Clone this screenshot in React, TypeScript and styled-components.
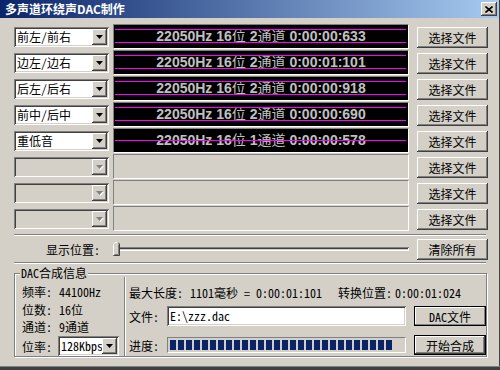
import React, { FC } from 'react';
import styled, { createGlobalStyle, css } from 'styled-components';

const GlobalStyle = createGlobalStyle`
  html, body {
    margin: 0;
    padding: 0;
    background: #d4d0c8;
  }
  body {
    font-family: "Noto Sans Mono CJK SC", "Noto Sans CJK SC", sans-serif;
    font-size: 12px;
    color: #000;
  }
  * {
    box-sizing: border-box;
  }
`;

const raised = css`
  background: #d4d0c8;
  box-shadow: inset -1px -1px #404040, inset 1px 1px #fff, inset -2px -2px #808080;
`;

const sunken = css`
  box-shadow: inset 1px 1px #808080, inset -1px -1px #fff, inset 2px 2px #404040, inset -2px -2px #d4d0c8;
`;

const Window = styled.div`
  width: 500px;
  height: 370px;
  background: #d4d0c8;
  display: flex;
  flex-direction: column;
  padding: 0 1px 4px 0;
  box-shadow: inset 0 -3px #404040, inset 0 -4px #808080, inset -1px 0 #404040;
  overflow: hidden;
`;

const TitleBar = styled.div`
  height: 18px;
  display: flex;
  align-items: center;
  justify-content: space-between;
  padding: 0 2px 0 5px;
  background: linear-gradient(to right, #0a246a, #a6caf0);
`;

const Title = styled.div`
  color: #fff;
  font-family: "Noto Sans CJK SC", sans-serif;
  font-weight: bold;
  font-size: 12px;
  line-height: 18px;
`;

const CloseButton = styled.div`
  ${raised};
  width: 16px;
  height: 14px;
  display: flex;
  align-items: center;
  justify-content: center;
`;

const Body = styled.div`
  padding: 6px 0 0 14px;
  display: flex;
  flex-direction: column;
`;

const Row = styled.div`
  display: flex;
  align-items: center;
  height: 26px;
`;

const Combo = styled.div<{ $disabled?: boolean; $width?: number }>`
  ${sunken};
  width: ${p => p.$width ?? 95}px;
  height: 20px;
  padding: 2px;
  display: flex;
  background: ${p => (p.$disabled ? '#d4d0c8' : '#fff')};
`;

const ComboText = styled.div`
  flex: 1;
  min-width: 0;
  padding-left: 1px;
  line-height: 16px;
  white-space: nowrap;
`;

const ComboButton = styled.div`
  ${raised};
  flex: none;
  width: 15px;
  height: 16px;
  display: flex;
  align-items: center;
  justify-content: center;
`;

const Cell = styled.div<{ $filled?: boolean }>`
  position: relative;
  align-self: flex-start;
  margin-left: 4px;
  width: 296px;
  height: 25px;
  border: 1px solid;
  border-color: #808080 #fff #fff #808080;
  background: ${p => (p.$filled ? '#000' : '#d4d0c8')};
  display: flex;
  align-items: center;
  justify-content: center;
`;

const WaveText = styled.div`
  color: #c0c0c0;
  font-family: "Liberation Sans", "Noto Sans CJK SC", sans-serif;
  font-size: 14px;
  font-weight: bold;
  white-space: nowrap;
  line-height: 23px;
`;

const Cjk = styled.span`
  font-weight: normal;
`;

const Wave = styled.svg`
  position: absolute;
  left: 0;
  top: 0;
`;

const Button = styled.div<{ $default?: boolean; $outlined?: boolean; $width?: number; $height?: number }>`
  ${raised};
  margin-left: 8px;
  width: ${p => p.$width ?? 71}px;
  height: ${p => p.$height ?? 21}px;
  display: flex;
  align-items: center;
  justify-content: center;
  font-family: "Noto Sans Mono CJK SC", "Noto Sans CJK SC", sans-serif;
  font-size: 12px;
  ${p =>
    p.$outlined &&
    css`
      box-shadow: inset 0 0 0 1px #000, inset -2px -2px #808080, inset 2px 2px #fff;
    `}
  ${p =>
    p.$default &&
    css`
      box-shadow: inset 0 0 0 1px #000, inset -2px -2px #404040, inset 2px 2px #fff, inset -3px -3px #808080;
    `}
`;

const Separator = styled.div<{ $top?: number }>`
  width: 472px;
  height: 2px;
  margin-top: ${p => p.$top ?? 0}px;
  border-top: 1px solid #808080;
  border-bottom: 1px solid #fff;
`;

const SliderLabel = styled.div`
  width: 95px;
  padding-right: 9px;
  text-align: right;
`;

const Slider = styled.div`
  position: relative;
  margin-left: 4px;
  width: 296px;
  height: 16px;
  display: flex;
  align-items: center;
`;

const Track = styled.div`
  flex: 1;
  margin-left: 3px;
  height: 4px;
  box-shadow: inset 1px 1px #808080, inset -1px -1px #fff, inset 2px 2px #404040;
`;

const Thumb = styled.svg`
  position: absolute;
  left: 0;
  top: 1px;
`;

const GroupBox = styled.div`
  position: relative;
  margin-top: 9px;
  width: 473px;
  height: 84px;
  border: 1px solid #808080;
  box-shadow: inset 1px 1px #fff, 1px 1px #fff;
  display: flex;
`;

const Caption = styled.div`
  position: absolute;
  top: -9px;
  left: 5px;
  padding: 0 1px;
  line-height: 16px;
  background: #d4d0c8;
`;

const InfoColumn = styled.div`
  width: 109px;
  padding: 8px 0 0 7px;
  display: grid;
  grid-template-rows: 18px 18px 17px 22px;
  align-content: start;
  align-items: center;
`;

const InfoRow = styled.div`
  display: flex;
  align-items: center;
  white-space: nowrap;
`;

const InfoLabel = styled.span<{ $width: number }>`
  display: inline-block;
  flex: none;
  width: ${p => p.$width}px;
  white-space: nowrap;
`;

const VSep = styled.div`
  width: 2px;
  margin-top: 3px;
  border-left: 1px solid #808080;
  border-right: 1px solid #fff;
`;

const MainColumn = styled.div`
  flex: 1;
  padding: 9px 0 0 3px;
  display: flex;
  flex-direction: column;
`;

const StatusLine = styled.div`
  height: 18px;
  display: flex;
  align-items: center;
  white-space: nowrap;
`;

const FieldRow = styled.div<{ $top: number }>`
  margin-top: ${p => p.$top}px;
  height: 20px;
  display: flex;
  align-items: center;
`;

const TextInput = styled.div`
  ${sunken};
  width: 239px;
  height: 20px;
  padding: 0 3px;
  background: #fff;
  line-height: 20px;
`;

const Progress = styled.div`
  width: 239px;
  height: 16px;
  padding: 2px;
  border: 1px solid;
  border-color: #808080 #fff #fff #808080;
`;

const ProgressFill = styled.div`
  height: 100%;
  background: repeating-linear-gradient(to right, #0a246a 0, #0a246a 6px, transparent 6px, transparent 8px);
`;

const Arrow: FC<{ disabled?: boolean }> = ({ disabled }) => (
  <svg width="8" height="5" viewBox="0 0 8 5">
    {disabled && <polygon points="1,1 8,1 4.5,5" fill="#fff" />}
    <polygon points="0,0 7,0 3.5,4" fill={disabled ? '#808080' : '#000'} />
  </svg>
);

type Channel = { name: string; chans: number; time: string };

const channels: Channel[] = [
  { name: '前左/前右', chans: 2, time: '0:00:00:633' },
  { name: '边左/边右', chans: 2, time: '0:00:01:101' },
  { name: '后左/后右', chans: 2, time: '0:00:00:918' },
  { name: '前中/后中', chans: 2, time: '0:00:00:690' },
  { name: '重低音', chans: 1, time: '0:00:00:578' },
];

const progress = 224;

const App: FC = () => {
  return (
    <>
      <GlobalStyle />
      <Window>
        <TitleBar>
          <Title>多声道环绕声DAC制作</Title>
          <CloseButton>
            <svg width="8" height="7" viewBox="0 0 8 7">
              <path d="M0.5 0.5 L7.5 6.5 M7.5 0.5 L0.5 6.5" stroke="#000" strokeWidth="1.6" />
            </svg>
          </CloseButton>
        </TitleBar>

        <Body>
          {channels.map(c => (
            <Row key={c.name}>
              <Combo>
                <ComboText>{c.name}</ComboText>
                <ComboButton><Arrow /></ComboButton>
              </Combo>
              <Cell $filled>
                <WaveText>
                  22050Hz 16<Cjk>位</Cjk> {c.chans}<Cjk>通道</Cjk> {c.time}
                </WaveText>
                <Wave width="294" height="23">
                  {c.chans === 2 ? (
                    <>
                      <line x1="1" x2="292" y1="4.5" y2="4.5" stroke="#ff00ff" />
                      <line x1="1" x2="292" y1="17.5" y2="17.5" stroke="#ff00ff" />
                    </>
                  ) : (
                    <line x1="1" x2="292" y1="11.5" y2="11.5" stroke="#ff00ff" />
                  )}
                </Wave>
              </Cell>
              <Button>选择文件</Button>
            </Row>
          ))}
          {[0, 1, 2].map(i => (
            <Row key={i}>
              <Combo $disabled>
                <ComboText />
                <ComboButton><Arrow disabled /></ComboButton>
              </Combo>
              <Cell />
              <Button>选择文件</Button>
            </Row>
          ))}

          <Separator $top={2} />

          <Row>
            <SliderLabel>显示位置:</SliderLabel>
            <Slider>
              <Track />
              <Thumb width="7" height="14" viewBox="0 0 7 14">
                <path d="M0.5 13.5 V2 L2 0.5 H5 L6.5 2 V13.5 Z" fill="#d4d0c8" />
                <path d="M0.5 13 V2 L2 0.5 H5" stroke="#fff" fill="none" />
                <path d="M5 0.5 L6.5 2 V13.5 H0.5" stroke="#404040" fill="none" />
                <path d="M5.5 2.5 V12.5 H1.5" stroke="#808080" fill="none" />
              </Thumb>
            </Slider>
            <Button>清除所有</Button>
          </Row>

          <Separator />

          <GroupBox>
            <Caption>DAC合成信息</Caption>
            <InfoColumn>
              <InfoRow><InfoLabel $width={37}>频率:</InfoLabel>44100Hz</InfoRow>
              <InfoRow><InfoLabel $width={37}>位数:</InfoLabel>16位</InfoRow>
              <InfoRow><InfoLabel $width={37}>通道:</InfoLabel>9通道</InfoRow>
              <InfoRow>
                <InfoLabel $width={36}>位率:</InfoLabel>
                <Combo $width={61}>
                  <ComboText>128Kbps</ComboText>
                  <ComboButton><Arrow /></ComboButton>
                </Combo>
              </InfoRow>
            </InfoColumn>
            <VSep />
            <MainColumn>
              <StatusLine>
                <InfoLabel $width={61}>最大长度:</InfoLabel>
                <InfoLabel $width={148}>1101毫秒 = 0:00:01:101</InfoLabel>
                <InfoLabel $width={57}>转换位置:</InfoLabel>
                0:00:01:024
              </StatusLine>
              <FieldRow $top={5}>
                <InfoLabel $width={38}>文件:</InfoLabel>
                <TextInput>E:\zzz.dac</TextInput>
                <Button $width={72} $height={20} $outlined>DAC文件</Button>
              </FieldRow>
              <FieldRow $top={9}>
                <InfoLabel $width={38}>进度:</InfoLabel>
                <Progress>
                  <ProgressFill style={{ width: progress }} />
                </Progress>
                <Button $width={72} $height={20} $default>开始合成</Button>
              </FieldRow>
            </MainColumn>
          </GroupBox>
        </Body>
      </Window>
    </>
  );
};

export default App;
